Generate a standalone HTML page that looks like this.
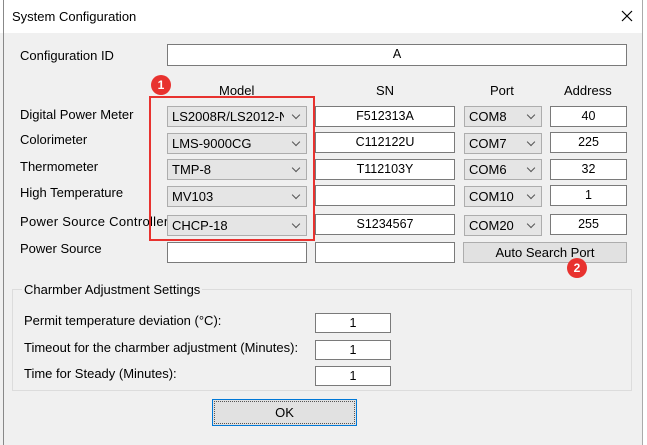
<!DOCTYPE html>
<html><head><style>
body{margin:0;width:647px;height:445px;background:#f0f0f0;font-family:"Liberation Sans",sans-serif;font-size:13px;color:#000;position:relative;overflow:hidden}
.a{position:absolute}
.t{position:absolute;white-space:nowrap}
.in{position:absolute;background:#fff;border:1px solid #7a7a7a;box-sizing:border-box;text-align:center;line-height:19px;font-size:12.5px}
.cb{position:absolute;background:#e5e5e5;border:1px solid #adadad;box-sizing:border-box;line-height:19px;padding-left:4px;font-size:13px;overflow:hidden;white-space:nowrap}
.cb:after{content:"";position:absolute;right:7px;top:5px;width:5px;height:5px;border-right:1px solid #555;border-bottom:1px solid #555;transform:rotate(45deg)}
.cb span{display:block;width:calc(100% - 22px);overflow:hidden}
.badge{position:absolute;width:20px;height:20px;border-radius:50%;background:#e8322f;color:#fff;font-weight:bold;text-align:center;line-height:20px;font-size:12px}
</style></head><body>
<div class="a" style="left:0;top:0;width:647px;height:33px;background:#fff"></div>
<div class="a" style="left:3px;top:0;width:1px;height:445px;background:#888"></div>
<div class="a" style="left:642px;top:0;width:1px;height:445px;background:#aaa"></div>
<div class="a" style="left:643px;top:0;width:4px;height:445px;background:#fff"></div>
<div class="t" style="left:12px;top:9px;font-size:13px">System Configuration</div>
<svg class="a" style="left:621px;top:10px" width="12" height="12"><path d="M1 1L11 11M11 1L1 11" stroke="#000" stroke-width="1.2"/></svg>

<div class="t" style="left:20px;top:48px">Configuration ID</div>
<div class="in" style="left:167px;top:44px;width:460px;height:22px">A</div>

<div class="t" style="left:219px;top:83px">Model</div>
<div class="t" style="left:376px;top:83px">SN</div>
<div class="t" style="left:490px;top:83px">Port</div>
<div class="t" style="left:564px;top:83px">Address</div>

<div class="t" style="left:20px;top:107px">Digital Power Meter</div>
<div class="t" style="left:20px;top:132px">Colorimeter</div>
<div class="t" style="left:20px;top:159px">Thermometer</div>
<div class="t" style="left:20px;top:185px">High Temperature</div>
<div class="t" style="left:20px;top:214px;letter-spacing:0.3px">Power Source Controller</div>
<div class="t" style="left:20px;top:241px">Power Source</div>

<div class="cb" style="left:167px;top:106px;width:140px;height:21px"><span>LS2008R/LS2012-NE</span></div>
<div class="cb" style="left:167px;top:133px;width:140px;height:21px"><span>LMS-9000CG</span></div>
<div class="cb" style="left:167px;top:159px;width:140px;height:21px"><span>TMP-8</span></div>
<div class="cb" style="left:167px;top:186px;width:140px;height:21px"><span>MV103</span></div>
<div class="cb" style="left:167px;top:215px;width:140px;height:21px"><span>CHCP-18</span></div>
<div class="in" style="left:167px;top:242px;width:140px;height:21px"></div>

<div class="in" style="left:315px;top:106px;width:140px;height:21px">F512313A</div>
<div class="in" style="left:315px;top:132px;width:140px;height:21px">C112122U</div>
<div class="in" style="left:315px;top:159px;width:140px;height:21px">T112103Y</div>
<div class="in" style="left:315px;top:185px;width:140px;height:21px"></div>
<div class="in" style="left:315px;top:214px;width:140px;height:21px">S1234567</div>
<div class="in" style="left:315px;top:242px;width:140px;height:21px"></div>

<div class="cb" style="left:464px;top:106px;width:78px;height:21px"><span>COM8</span></div>
<div class="cb" style="left:464px;top:133px;width:78px;height:21px"><span>COM7</span></div>
<div class="cb" style="left:464px;top:159px;width:78px;height:21px"><span>COM6</span></div>
<div class="cb" style="left:464px;top:186px;width:78px;height:21px"><span>COM10</span></div>
<div class="cb" style="left:464px;top:215px;width:78px;height:21px"><span>COM20</span></div>

<div class="in" style="left:550px;top:106px;width:77px;height:21px">40</div>
<div class="in" style="left:550px;top:132px;width:77px;height:21px">225</div>
<div class="in" style="left:550px;top:159px;width:77px;height:21px">32</div>
<div class="in" style="left:550px;top:185px;width:77px;height:21px">1</div>
<div class="in" style="left:550px;top:214px;width:77px;height:21px">255</div>

<div class="a" style="left:463px;top:242px;width:164px;height:21px;background:#e1e1e1;border:1px solid #adadad;box-sizing:border-box;text-align:center;line-height:19px">Auto Search Port</div>

<div class="a" style="left:149px;top:96px;width:166px;height:145px;border:2px solid #e8322f;box-sizing:border-box"></div>
<div class="badge" style="left:151px;top:75px">1</div>
<div class="badge" style="left:567px;top:258px">2</div>

<div class="a" style="left:12px;top:289px;width:620px;height:102px;border:1px solid #dcdcdc;box-sizing:border-box"></div>
<div class="t" style="left:22px;top:282px;background:#f0f0f0;padding:0 2px">Charmber Adjustment Settings</div>
<div class="t" style="left:24px;top:313px">Permit temperature deviation (°C):</div>
<div class="t" style="left:24px;top:340px">Timeout for the charmber adjustment (Minutes):</div>
<div class="t" style="left:24px;top:366px">Time for Steady (Minutes):</div>
<div class="in" style="left:315px;top:313px;width:76px;height:20px">1</div>
<div class="in" style="left:315px;top:340px;width:76px;height:20px">1</div>
<div class="in" style="left:315px;top:366px;width:76px;height:20px">1</div>

<div class="a" style="left:212px;top:399px;width:145px;height:27px;background:#e1e1e1;border:1px solid #0078d7;box-sizing:border-box;text-align:center;line-height:25px"><div style="position:absolute;inset:1px;border:1px dotted #555"></div>OK</div>
</body></html>
